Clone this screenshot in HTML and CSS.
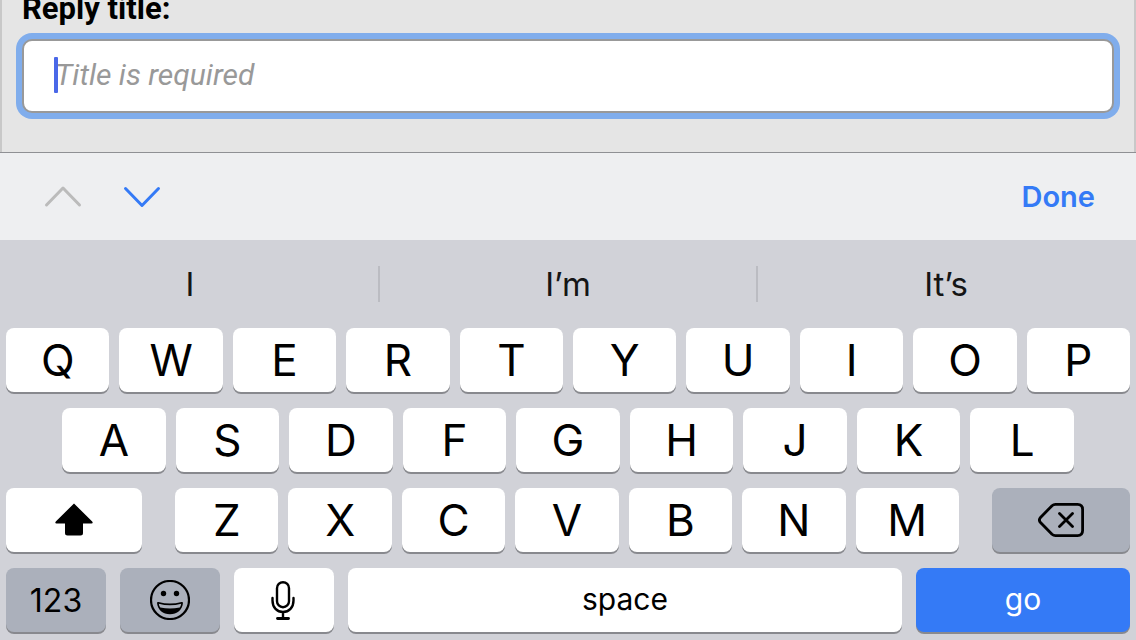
FILE: index.html
```html
<!DOCTYPE html>
<html lang="en">
<head>
  <meta charset="UTF-8" />
  <title>Reply</title>
  <meta name="viewport" content="width=device-width, initial-scale=1">
  <link rel="stylesheet" href="styles.css">
</head>
<body>
  <form class="reply">
    <label for="replyTitle">Reply title:</label>
    <div class="field">
      <input type="text" id="replyTitle" placeholder="Title is required">
      <span class="caret"></span>
    </div>
  </form>

  <div class="accessory">
    <button type="button" class="nav" aria-label="Previous field" disabled>
      <svg width="40" height="26" viewBox="0 0 40 26"><path d="M3.500 21 20 4 36.500 21"/></svg>
    </button>
    <button type="button" class="nav" aria-label="Next field">
      <svg width="40" height="26" viewBox="0 0 40 26"><path d="M3.500 4.500 20 21.500 36.500 4.500"/></svg>
    </button>
    <button type="button" class="done">Done</button>
  </div>

  <div class="keyboard">
    <div class="suggestions">
      <button type="button">I</button>
      <button type="button">I’m</button>
      <button type="button">It’s</button>
    </div>

    <div class="row">
      <button type="button" class="key">Q</button>
      <button type="button" class="key">W</button>
      <button type="button" class="key">E</button>
      <button type="button" class="key">R</button>
      <button type="button" class="key">T</button>
      <button type="button" class="key">Y</button>
      <button type="button" class="key">U</button>
      <button type="button" class="key">I</button>
      <button type="button" class="key">O</button>
      <button type="button" class="key">P</button>
    </div>

    <div class="row row-home">
      <button type="button" class="key">A</button>
      <button type="button" class="key">S</button>
      <button type="button" class="key">D</button>
      <button type="button" class="key">F</button>
      <button type="button" class="key">G</button>
      <button type="button" class="key">H</button>
      <button type="button" class="key">J</button>
      <button type="button" class="key">K</button>
      <button type="button" class="key">L</button>
    </div>

    <div class="row-shift">
      <button type="button" class="key" aria-label="Shift">
        <svg width="38" height="34" viewBox="0 0 38 34"><path d="M19 .5 L37.200 18.500Q38.500 20.500 36.500 20.500H28V30Q28 32.500 25.500 32.500H12.500Q10 32.500 10 30V20.500H1.500Q-.5 20.500.8 18.500Z"/></svg>
      </button>
      <div class="row">
        <button type="button" class="key">Z</button>
        <button type="button" class="key">X</button>
        <button type="button" class="key">C</button>
        <button type="button" class="key">V</button>
        <button type="button" class="key">B</button>
        <button type="button" class="key">N</button>
        <button type="button" class="key">M</button>
      </div>
      <button type="button" class="key dark" aria-label="Delete">
        <svg width="46" height="36" viewBox="1 0 46 36" fill="none" stroke="#000" stroke-width="2.800" stroke-linecap="round" stroke-linejoin="round"><path d="M18.500 2.400H40.500Q45.600 2.400 45.600 7.500V28.500Q45.600 33.600 40.500 33.600H18.500Q16.500 33.600 15 32.300L3.500 20.500Q1.300 18 3.500 15.500L15 3.700Q16.500 2.400 18.500 2.400ZM22.500 11.500 35.500 24.500M35.500 11.500 22.500 24.500"/></svg>
      </button>
    </div>

    <div class="row-bottom">
      <button type="button" class="key dark digits">123</button>
      <button type="button" class="key dark" aria-label="Emoji">
        <svg width="40" height="40" viewBox="0 0 40 40"><circle cx="20" cy="20" r="19" fill="none" stroke="#000" stroke-width="2.200"/><circle cx="13.500" cy="13.500" r="2.700"/><circle cx="26.500" cy="13.500" r="2.700"/><path d="M7 22.800Q7.200 21.700 8.500 22Q20 25 31.500 22Q32.800 21.700 33 22.800C32.500 30 27 34.200 20 34.200S7.500 30 7 22.800Z"/><path d="M8.800 23.700Q20 26.800 31.200 23.700Q31 25.800 29.700 27.600Q20 29.600 10.300 27.600Q9 25.800 8.800 23.700Z" fill="#abb0bb"/></svg>
      </button>
      <button type="button" class="key" aria-label="Dictate">
        <svg width="26" height="40" viewBox="0 0 26 40" fill="none" stroke="#000" stroke-width="2.400" stroke-linecap="round"><rect x="6" y="2.200" width="12" height="25" rx="6"/><path d="M1.500 18V20.500C1.500 27.500 6 32 12 32S22.500 27.500 22.500 20.500V18M12 32V38"/><path d="M6.500 38.500H17.500" stroke-width="2.800"/></svg>
      </button>
      <button type="button" class="key word">space</button>
      <button type="submit" class="key go word">go</button>
    </div>
  </div>
</body>
</html>
```
FILE: styles.css
```css
* {
  box-sizing: border-box;
}
html, body {
  margin: 0;
  padding: 0;
}
body {
  min-height: 100vh;
  display: flex;
  flex-direction: column;
  font-family: Inter, "Liberation Sans", sans-serif;
  background: #d1d2d8;
  color: #000;
}
button {
  display: flex;
  align-items: center;
  justify-content: center;
  margin: 0;
  padding: 0;
  border: none;
  background: none;
  color: inherit;
  font-family: inherit;
}
svg {
  display: block;
}

/* Reply form */
.reply {
  padding: 0 20px 39px;
  background: #e5e5e5;
  border: 2px solid #c8c8c8;
  border-width: 0 2px;
  font-family: Roboto, sans-serif;
}
.reply label {
  display: block;
  font-size: 31px;
  line-height: 18px;
  font-weight: 700;
}
.field {
  position: relative;
  margin-top: 21px;
}
.field input {
  display: block;
  width: 100%;
  height: 74px;
  padding: 0 31px 4px;
  border: 2px solid #999;
  border-radius: 10px;
  background: #fff;
  box-shadow: 0 0 0 6px #80adec;
  font-family: inherit;
  font-size: 30px;
  outline: none;
}
.field input::placeholder {
  color: #999;
  font-style: italic;
  opacity: 1;
}
.caret {
  position: absolute;
  left: 32px;
  top: 18px;
  width: 4px;
  height: 36px;
  border-radius: 1px;
  background: #4a68e8;
}

/* Bar above the keyboard */
.accessory {
  display: flex;
  align-items: center;
  gap: 39px;
  height: 88px;
  padding: 0 41px 0 43px;
  border-top: 1px solid #8f9094;
  background: #eeeff1;
  color: #347af6;
}
.nav svg {
  fill: none;
  stroke: #347af6;
  stroke-width: 3;
  stroke-linecap: round;
  stroke-linejoin: round;
}
.nav:disabled svg {
  stroke: #bbb;
}
.done {
  margin-left: auto;
  font-size: 29px;
  font-weight: 600;
}

/* Keyboard */
.keyboard {
  display: flex;
  flex-direction: column;
  gap: 16px;
  padding: 0 6px 8px;
}
.suggestions {
  display: flex;
  align-items: center;
  height: 72px;
  padding-top: 16px;
  margin: 0 -4px;
}
.suggestions button {
  flex: 1;
  height: 36px;
  font-size: 33px;
  color: #151515;
}
.suggestions button + button {
  border-left: 2px solid #bbbcc2;
}
.row {
  display: flex;
  gap: 10px;
}
.row .key {
  flex: 1;
}
.row-home {
  padding: 0 5%;
}
.row-shift {
  display: grid;
  grid-template-columns: 136fr 784fr 138fr;
  gap: 33px;
}
.row-bottom {
  display: grid;
  grid-template-columns: 100fr 100fr 100fr 554fr 214fr;
  gap: 14px;
}
.key {
  min-width: 0;
  height: 64px;
  border-radius: 8px;
  background: #fff;
  box-shadow: 0 2px 0 #88898e;
  font-size: 44px;
}
.digits {
  font-size: 32px;
}
.word {
  padding-bottom: 2px;
  font-size: 30px;
}
.dark {
  background: #abb0bb;
}
.go {
  background: #347af6;
  color: #fff;
}
```
